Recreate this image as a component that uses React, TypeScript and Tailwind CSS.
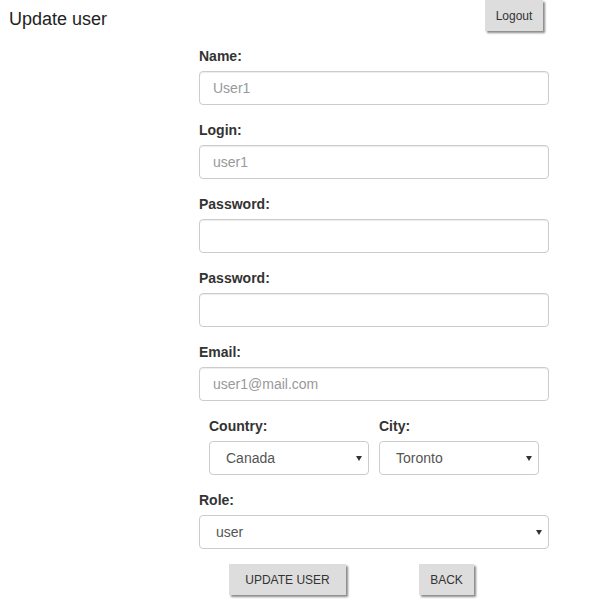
import React from 'react';

const font = { fontFamily: '"Liberation Sans", Arial, sans-serif' };

const Field = ({ label, placeholder, type = 'text' }: { label: string; placeholder?: string; type?: string }) => (
  <div className="mb-[14px]">
    <label className="block h-[20px] text-[14px] leading-[22px] font-bold text-[#333]">{label}</label>
    <input
      type={type}
      placeholder={placeholder}
      className="mt-[6px] block h-[34px] w-full rounded-[4px] border border-[#ccc] bg-white px-[13px] text-[14px] text-[#555] shadow-[inset_0_1px_1px_rgba(0,0,0,0.075)] outline-none placeholder:text-[#999]"
    />
  </div>
);

const Select = ({ value, options }: { value: string; options: string[] }) => (
  <div className="relative mt-[6px] h-[34px]">
    <select
      defaultValue={value}
      className="block h-full w-full appearance-none rounded-[4px] border border-[#ccc] bg-white pl-[16px] text-[14px] text-[#555] outline-none"
    >
      {options.map(o => (
        <option key={o}>{o}</option>
      ))}
    </select>
    <svg className="pointer-events-none absolute right-[7px] top-[15px]" width="6" height="5" viewBox="0 0 6 5">
      <path d="M0 0 H6 L3 5 Z" fill="#333" />
    </svg>
  </div>
);

const GrayButton = ({ children, className = '' }: { children: React.ReactNode; className?: string }) => (
  <button
    className={`h-[31px] bg-[#dddddd] text-[12px] text-[#333] shadow-[2px_2px_2px_#8a8a8a] ${className}`}
  >
    {children}
  </button>
);

export default function App() {
  return (
    <div className="min-h-[612px] w-[602px] bg-white" style={font}>
      <div className="flex h-[45px] items-start justify-between pr-[59px]">
        <h1 className="pl-[9px] pt-[7px] text-[18px] leading-[24px] font-normal text-[#222]">Update user</h1>
        <GrayButton className="w-[58px]">Logout</GrayButton>
      </div>

      <form className="ml-[199px] w-[350px]" onSubmit={e => e.preventDefault()}>
        <Field label="Name:" placeholder="User1" />
        <Field label="Login:" placeholder="user1" />
        <Field label="Password:" type="password" />
        <Field label="Password:" type="password" />
        <Field label="Email:" placeholder="user1@mail.com" />

        <div className="mb-[14px] grid grid-cols-[160px_160px] gap-x-[10px] px-[10px]">
          <div>
            <label className="block h-[20px] text-[14px] leading-[22px] font-bold text-[#333]">Country:</label>
            <Select value="Canada" options={['Canada', 'USA', 'Ukraine']} />
          </div>
          <div>
            <label className="block h-[20px] text-[14px] leading-[22px] font-bold text-[#333]">City:</label>
            <Select value="Toronto" options={['Toronto', 'Montreal', 'Vancouver']} />
          </div>
        </div>

        <div>
          <label className="block h-[20px] text-[14px] leading-[22px] font-bold text-[#333]">Role:</label>
          <Select value="user" options={['user', 'admin']} />
        </div>

        <div className="mt-[15px] flex">
          <GrayButton className="ml-[30px] w-[117px]">UPDATE USER</GrayButton>
          <GrayButton className="ml-[73px] w-[55px]">BACK</GrayButton>
        </div>
      </form>
    </div>
  );
}
